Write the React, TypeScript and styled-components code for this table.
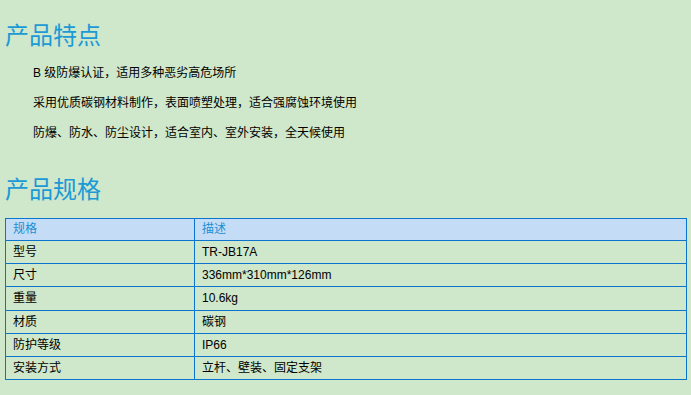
import React from "react";
import styled, { createGlobalStyle } from "styled-components";

const Global = createGlobalStyle`
  html, body {
    margin: 0;
    padding: 0;
    background: #cfe7ca;
  }
  body {
    font-family: "Liberation Sans", "Noto Sans CJK SC", Arial, sans-serif;
    font-size: 12px;
    color: #000;
  }
`;

const Page = styled.div`
  padding: 0 5px;
`;

const Heading = styled.h2<{ $top: number }>`
  margin: ${(p) => p.$top}px 0 0;
  font-family: "Noto Sans CJK SC", sans-serif;
  font-weight: normal;
  font-size: 24px;
  line-height: 36px;
  color: #1b9ad6;
`;

const Features = styled.ul`
  list-style: none;
  margin: 6px 0 0;
  padding: 0 0 0 28px;
`;

const Feature = styled.li`
  line-height: 30px;
  height: 30px;
`;

const Table = styled.table`
  margin-top: 12px;
  width: 682px;
  border-collapse: separate;
  border-spacing: 0;
  border-top: 1px solid #0b74cf;
  border-left: 1px solid #0b74cf;
  table-layout: fixed;
`;

const Cell = styled.td<{ $head?: boolean }>`
  padding: 0 0 0 7px;
  border-right: 1px solid #0b74cf;
  border-bottom: 1px solid #0b74cf;
  line-height: ${(p) => (p.$head ? "21px" : "22.17px")};
  height: ${(p) => (p.$head ? "21px" : "22.17px")};
  background: ${(p) => (p.$head ? "#c5dcf6" : "transparent")};
  color: ${(p) => (p.$head ? "#1b8fd2" : "#000")};
  text-align: left;
  font-weight: normal;
  white-space: nowrap;
  vertical-align: middle;
`;

const features = [
  "B 级防爆认证，适用多种恶劣高危场所",
  "采用优质碳钢材料制作，表面喷塑处理，适合强腐蚀环境使用",
  "防爆、防水、防尘设计，适合室内、室外安装，全天候使用",
];

const specs: [string, string][] = [
  ["型号", "TR-JB17A"],
  ["尺寸", "336mm*310mm*126mm"],
  ["重量", "10.6kg"],
  ["材质", "碳钢"],
  ["防护等级", "IP66"],
  ["安装方式", "立杆、壁装、固定支架"],
];

export default function App() {
  return (
    <Page>
      <Global />
      <Heading $top={16}>产品特点</Heading>
      <Features>
        {features.map((f) => (
          <Feature key={f}>{f}</Feature>
        ))}
      </Features>
      <Heading $top={22}>产品规格</Heading>
      <Table>
        <colgroup>
          <col style={{ width: 189 }} />
          <col />
        </colgroup>
        <thead>
          <tr>
            <Cell as="th" $head>
              规格
            </Cell>
            <Cell as="th" $head>
              描述
            </Cell>
          </tr>
        </thead>
        <tbody>
          {specs.map(([k, v]) => (
            <tr key={k}>
              <Cell>{k}</Cell>
              <Cell>{v}</Cell>
            </tr>
          ))}
        </tbody>
      </Table>
    </Page>
  );
}
